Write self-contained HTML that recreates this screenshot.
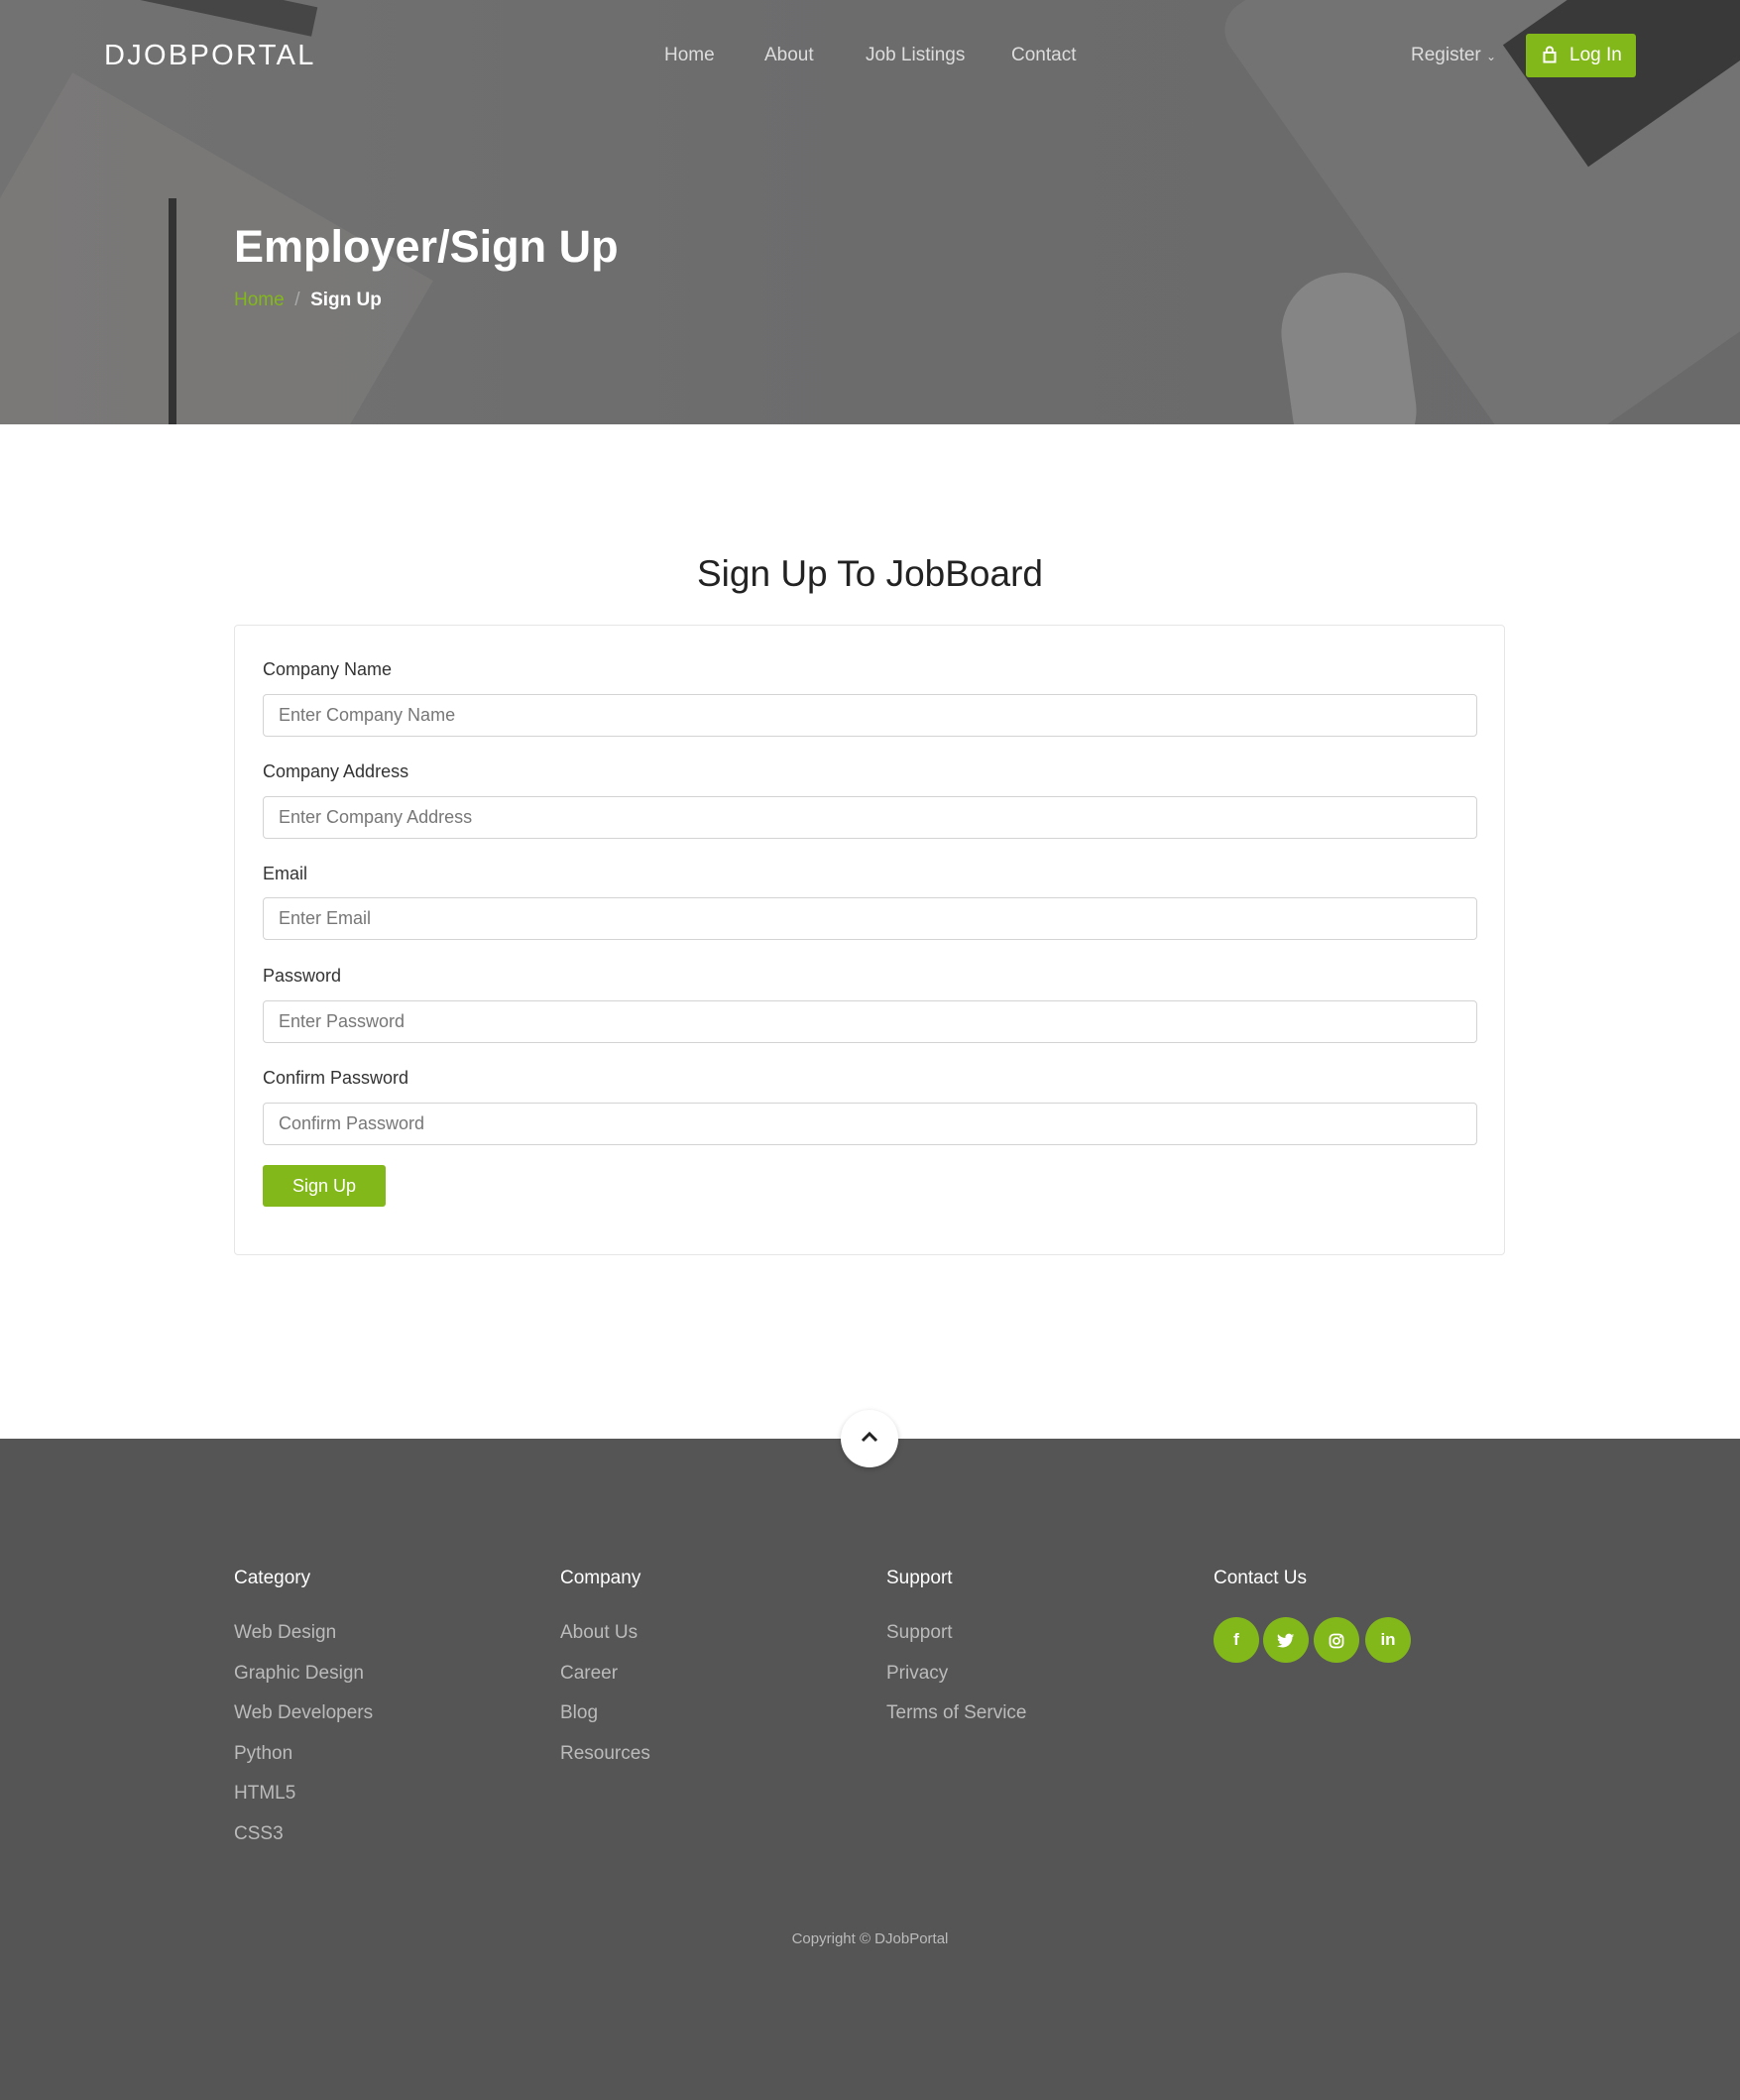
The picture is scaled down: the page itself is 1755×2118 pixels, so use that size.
<!DOCTYPE html>
<html><head><meta charset="utf-8"><style>
*{box-sizing:border-box;margin:0;padding:0}
body{width:1755px;height:2118px;font-family:"Liberation Sans",sans-serif;background:#fff;position:relative;overflow:hidden;color:#222}
.hero{position:absolute;left:0;top:0;width:1755px;height:428px;background:linear-gradient(90deg,#727272 0%,#6c6c6d 50%,#6a6a6b 100%);overflow:hidden}
.abs{position:absolute}
.nav{position:absolute;top:45px;font-size:19px;color:#ddd}
.logo{left:105px;top:40px;font-size:29px;color:#fff;letter-spacing:2.3px}
.login{left:1539px;top:34px;width:111px;height:44px;background:#83b81a;border-radius:3px;color:#fff;font-size:19px;line-height:44px;padding-left:44px}
h1{position:absolute;left:236px;top:223px;font-size:45px;color:#fff;font-weight:bold}
.bc{position:absolute;left:236px;top:292px;font-size:19px}
h2{position:absolute;left:0;width:1755px;text-align:center;top:558px;font-size:37px;font-weight:normal;color:#222}
.card{position:absolute;left:236px;top:630px;width:1282px;height:636px;border:1px solid #e6e6e6;border-radius:4px}
.lbl{position:absolute;left:265px;font-size:18px;color:#333}
.inp{position:absolute;left:265px;width:1225px;height:43px;border:1px solid #d3d3d3;border-radius:4px;font-size:18px;color:#777;padding-left:15px;line-height:41px}
.btn{position:absolute;left:265px;top:1175px;width:124px;height:42px;background:#83b81a;color:#fff;border-radius:3px;font-size:18px;text-align:center;line-height:42px}
.foot{position:absolute;left:0;top:1451px;width:1755px;height:667px;background:#555}
.up{position:absolute;left:848px;top:1422px;width:58px;height:58px;border-radius:50%;background:#fff;box-shadow:0 2px 6px rgba(0,0,0,.2)}
.fh{position:absolute;top:1581px;font-size:19px;color:#fff}
.fl{position:absolute;font-size:19px;color:#bbb}
.soc{position:absolute;top:1631px;width:46px;height:46px;border-radius:50%;background:#83b81a;color:#fff;font-weight:bold;font-size:17px;text-align:center;line-height:46px}
</style></head><body>
<div class="hero">
  <div class="abs" style="left:60px;top:-20px;width:260px;height:30px;background:#2a2a2a;transform:rotate(12deg);opacity:.6"></div>
  <div class="abs" style="left:-60px;top:150px;width:420px;height:420px;background:#8a8784;transform:rotate(30deg);opacity:.35"></div>
  <div class="abs" style="left:170px;top:200px;width:8px;height:240px;background:#333"></div>
  <div class="abs" style="left:1330px;top:-200px;width:600px;height:560px;background:#7b7b7c;transform:rotate(-35deg);border-radius:30px;opacity:.5"></div>
  <div class="abs" style="left:1530px;top:-60px;width:320px;height:150px;background:#2a2a2a;transform:rotate(-35deg);opacity:.8"></div>
  <div class="abs" style="left:1298px;top:275px;width:125px;height:200px;background:#858585;border-radius:60px;transform:rotate(-8deg)"></div>
</div>
<div class="abs logo">DJOBPORTAL</div>
<div class="nav" style="left:670px">Home</div>
<div class="nav" style="left:771px">About</div>
<div class="nav" style="left:873px">Job Listings</div>
<div class="nav" style="left:1020px">Contact</div>
<div class="nav" style="left:1423px">Register <span style="font-size:12px">&#8964;</span></div>
<div class="abs login"><svg class="abs" style="left:17px;top:12px" width="14" height="18" viewBox="0 0 14 18"><rect x="1.5" y="7" width="11" height="9.5" fill="none" stroke="#fff" stroke-width="2"/><path d="M4 7V4.5a3 3 0 0 1 6 0V7" fill="none" stroke="#fff" stroke-width="2"/></svg>Log In</div>
<h1>Employer/Sign Up</h1>
<div class="bc"><span style="color:#83b81a">Home</span> <span style="color:#aaa">&nbsp;/&nbsp;</span> <span style="color:#fff;font-weight:bold">Sign Up</span></div>
<h2>Sign Up To JobBoard</h2>
<div class="card"></div>
<div class="lbl" style="top:665px">Company Name</div>
<div class="inp" style="top:700px">Enter Company Name</div>
<div class="lbl" style="top:768px">Company Address</div>
<div class="inp" style="top:803px">Enter Company Address</div>
<div class="lbl" style="top:871px">Email</div>
<div class="inp" style="top:905px">Enter Email</div>
<div class="lbl" style="top:974px">Password</div>
<div class="inp" style="top:1009px">Enter Password</div>
<div class="lbl" style="top:1077px">Confirm Password</div>
<div class="inp" style="top:1112px">Confirm Password</div>
<div class="btn">Sign Up</div>
<div class="foot"></div>
<div class="up"><svg class="abs" style="left:19px;top:20px" width="20" height="14" viewBox="0 0 20 14"><path d="M3 11L10 4l7 7" fill="none" stroke="#222" stroke-width="3"/></svg></div>
<div class="fh" style="left:236px">Category</div>
<div class="fh" style="left:565px">Company</div>
<div class="fh" style="left:894px">Support</div>
<div class="fh" style="left:1224px">Contact Us</div>
<div class="fl" style="left:236px;top:1636px">Web Design</div>
<div class="fl" style="left:236px;top:1677px">Graphic Design</div>
<div class="fl" style="left:236px;top:1717px">Web Developers</div>
<div class="fl" style="left:236px;top:1758px">Python</div>
<div class="fl" style="left:236px;top:1798px">HTML5</div>
<div class="fl" style="left:236px;top:1839px">CSS3</div>
<div class="fl" style="left:565px;top:1636px">About Us</div>
<div class="fl" style="left:565px;top:1677px">Career</div>
<div class="fl" style="left:565px;top:1717px">Blog</div>
<div class="fl" style="left:565px;top:1758px">Resources</div>
<div class="fl" style="left:894px;top:1636px">Support</div>
<div class="fl" style="left:894px;top:1677px">Privacy</div>
<div class="fl" style="left:894px;top:1717px">Terms of Service</div>
<div class="soc" style="left:1224px">f</div>
<div class="soc" style="left:1274px"><svg width="18" height="16" viewBox="0 0 24 20" style="vertical-align:middle"><path d="M23 2.5a9 9 0 0 1-2.7.8A4.7 4.7 0 0 0 22.4.7a9.4 9.4 0 0 1-3 1.1A4.7 4.7 0 0 0 11.4 6 13.3 13.3 0 0 1 1.6 1a4.7 4.7 0 0 0 1.5 6.3 4.6 4.6 0 0 1-2.1-.6 4.7 4.7 0 0 0 3.7 4.6 4.7 4.7 0 0 1-2.1.1 4.7 4.7 0 0 0 4.4 3.3A9.4 9.4 0 0 1 0 16.6 13.3 13.3 0 0 0 7.2 18.7c8.6 0 13.4-7.2 13.4-13.4v-.6A9.5 9.5 0 0 0 23 2.5z" fill="#fff"/></svg></div>
<div class="soc" style="left:1325px"><svg width="16" height="16" viewBox="0 0 16 16" style="vertical-align:middle"><rect x="1.5" y="1.5" width="13" height="13" rx="4" fill="none" stroke="#fff" stroke-width="1.8"/><circle cx="8" cy="8" r="3" fill="none" stroke="#fff" stroke-width="1.8"/><circle cx="12" cy="4" r="1" fill="#fff"/></svg></div>
<div class="soc" style="left:1377px">in</div>
<div class="abs" style="left:0;width:1755px;text-align:center;top:1947px;font-size:15px;color:#bbb">Copyright © DJobPortal</div>
</body></html>
